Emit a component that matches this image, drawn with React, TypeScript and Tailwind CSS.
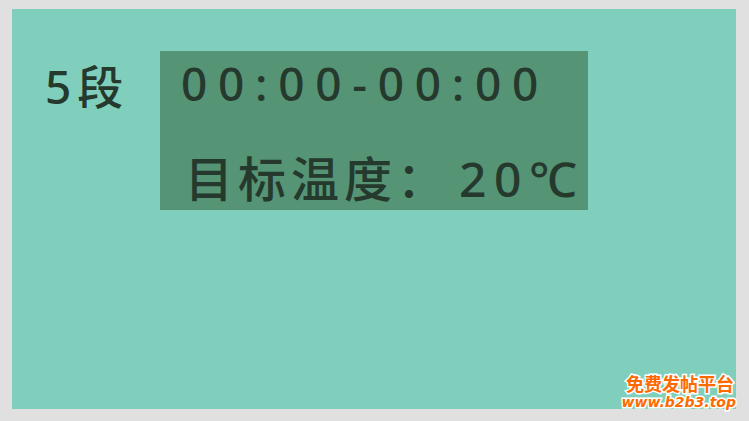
import React from "react";

const font = { fontFamily: '"Noto Sans", "Noto Sans CJK SC", sans-serif' };

export default function App() {
  return (
    <div
      className="relative w-[749px] h-[421px] bg-[#e0e0e0] pt-[9px] pl-[12px] pr-[13px] pb-[12px] flex"
      style={font}
    >
      <div className="flex-1 bg-[#80cfbd] flex items-start pt-[42px] text-[#25392d] font-medium">
        <div className="ml-[33px] w-[115px] text-[46px] leading-none tracking-[6px] mt-[12px]">5段</div>
        <div className="w-[428px] h-[159px] bg-[#569476] flex flex-col pl-[21px]">
          <div className="text-[46px] leading-none tracking-[10.7px] mt-[9px]">00:00-00:00</div>
          <div className="text-[48px] leading-none mt-[49px] pl-[4px] whitespace-nowrap flex">
            <span className="tracking-[5px]">目标温度：</span>
            <span className="tracking-[7.5px] ml-[9px]">20℃</span>
          </div>
        </div>
      </div>
      <div
        className="absolute right-[14px] bottom-[12px] flex flex-col items-end font-bold text-[#ff6a00] leading-none"
        style={{ fontFamily: '"Noto Sans CJK SC", "Noto Sans", sans-serif' }}
      >
        <div className="text-[18px] [paint-order:stroke_fill] [-webkit-text-stroke:3px_white] mr-[1px]">
          免费发帖平台
        </div>
        <div
          className="text-[14px] italic [paint-order:stroke_fill] [-webkit-text-stroke:3px_white] mt-[3px] mr-[-1px]"
          style={{ fontFamily: '"DejaVu Sans", sans-serif' }}
        >
          www.b2b3.top
        </div>
      </div>
    </div>
  );
}
